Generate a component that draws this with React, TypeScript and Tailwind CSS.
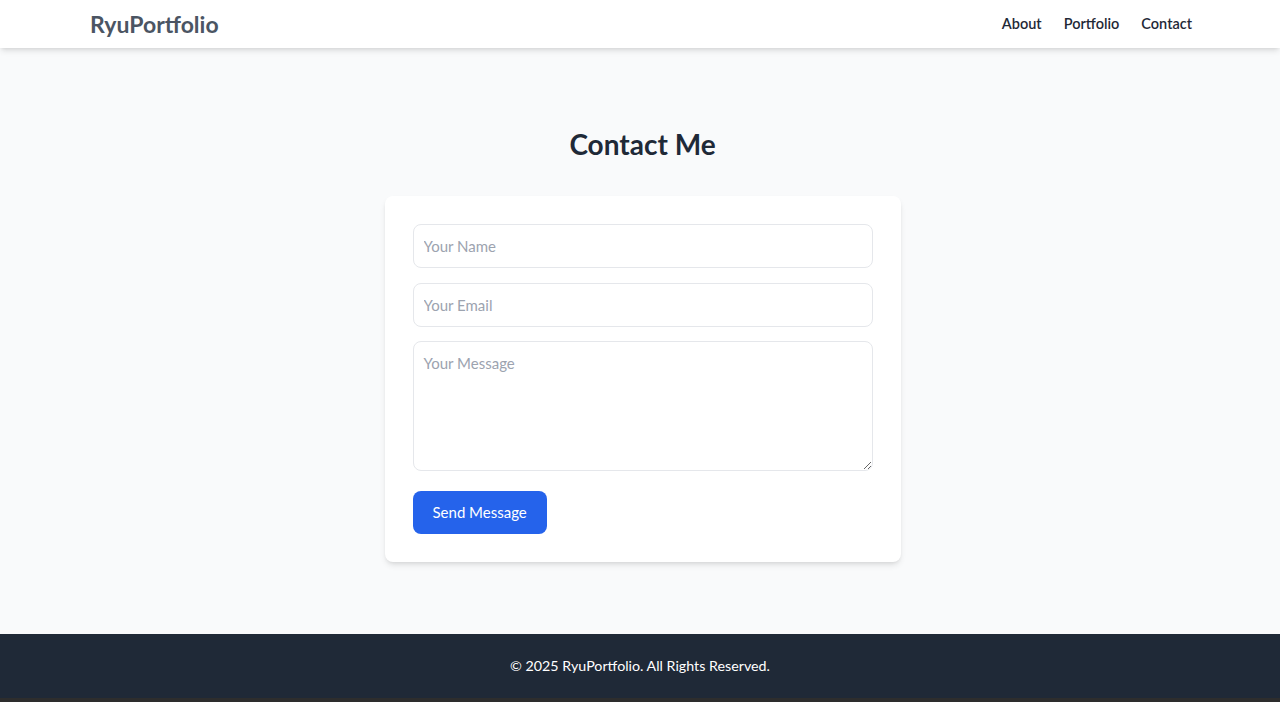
export default function App() {
  const font = { fontFamily: 'Lato, "Noto Sans", sans-serif' };
  return (
    <div className="min-h-screen flex flex-col bg-[#f9fafb]" style={font}>
      <header className="bg-white shadow-md relative z-10">
        <div className="max-w-6xl mx-auto px-6 h-[48px] flex items-center justify-between">
          <span className="text-[23px] font-bold text-[#4b5563] pl-[2px]">RyuPortfolio</span>
          <nav className="flex gap-[22px] text-[14.5px] font-semibold text-[#1f2937]">
            <a href="#">About</a>
            <a href="#">Portfolio</a>
            <a href="#">Contact</a>
          </nav>
        </div>
      </header>
      <main className="pt-[78px] pb-[72px] pl-[5px]">
        <h2 className="text-[28px] font-bold text-[#1f2937] text-center leading-9 mb-[34px]">Contact Me</h2>
        <div className="mx-auto w-[516px] bg-white rounded-lg shadow-md p-7">
          <form className="flex flex-col">
            <input
              type="text"
              placeholder="Your Name"
              className="w-full h-[44px] px-[10px] border border-[#e5e7eb] rounded-lg text-[15px] placeholder-[#9ca3af] outline-none"
            />
            <input
              type="email"
              placeholder="Your Email"
              className="mt-[15px] w-full h-[44px] px-[10px] border border-[#e5e7eb] rounded-lg text-[15px] placeholder-[#9ca3af] outline-none"
            />
            <textarea
              placeholder="Your Message"
              className="mt-[14px] w-full h-[130px] px-[10px] py-[10px] border border-[#e5e7eb] rounded-lg text-[15px] placeholder-[#9ca3af] outline-none"
            />
            <div className="mt-[20px]">
              <button
                type="button"
                className="bg-[#2563eb] text-white text-[15px] rounded-lg h-[43px] px-[20px]"
              >
                Send Message
              </button>
            </div>
          </form>
        </div>
      </main>
      <footer className="bg-[#1f2937] text-white text-[14.25px] text-center h-[64px] flex items-center justify-center">
        © 2025 RyuPortfolio. All Rights Reserved.
      </footer>
      <div className="h-[4px] bg-[#2d2d2d]" />
    </div>
  );
}
